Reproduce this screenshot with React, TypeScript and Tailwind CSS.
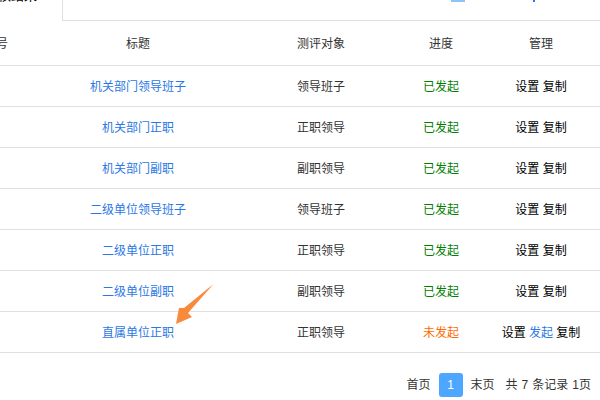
const rows = [
  { t: "机关部门领导班子", o: "领导班子", d: false },
  { t: "机关部门正职", o: "正职领导", d: false },
  { t: "机关部门副职", o: "副职领导", d: false },
  { t: "二级单位领导班子", o: "领导班子", d: false },
  { t: "二级单位正职", o: "正职领导", d: false },
  { t: "二级单位副职", o: "副职领导", d: false },
  { t: "直属单位正职", o: "正职领导", d: true },
];

export default function App() {
  return (
    <div className="relative w-[600px] h-[400px] overflow-hidden bg-white text-[12px] text-[#333] font-['Liberation_Sans','Noto_Sans_CJK_SC',sans-serif]">
      <div className="flex h-[21px] items-end">
        <div className="w-[63px] h-[21px] border-r border-[#e0e0e0] overflow-hidden relative">
          <span className="absolute right-[25px] bottom-[16px] text-[13px] text-black whitespace-nowrap">考核结果</span>
        </div>
        <div className="relative flex-1 h-[21px] border-b border-[#e0e0e0] overflow-hidden text-[#2b78e4]">
          <span className="absolute left-[388px] top-0 w-[14px] h-[2px] bg-[#8fc1fa]" />
          <span className="absolute left-[405px] bottom-[16px] whitespace-nowrap">排序</span>
          <span className="absolute left-[470px] top-0 w-[2px] h-[2px] bg-[#2b78e4]" />
          <span className="absolute left-[487px] bottom-[16px] whitespace-nowrap">删除</span>
        </div>
      </div>
      <div className="flex h-[45px] items-center border-b border-[#e0e0e0] pt-[2px]">
        <div className="w-[28px] pr-[20px] flex justify-end overflow-hidden"><span className="whitespace-nowrap">序号</span></div>
        <div className="w-[220px] text-center">标题</div>
        <div className="w-[146px] text-center">测评对象</div>
        <div className="w-[94px] text-center">进度</div>
        <div className="w-[106px] text-center">管理</div>
      </div>
      {rows.map((r) => (
        <div key={r.t} className="flex h-[41px] items-center border-b border-[#e0e0e0] pt-[2px]">
          <div className="w-[28px]" />
          <div className="w-[220px] text-center text-[#2b78e4]">{r.t}</div>
          <div className="w-[146px] text-center">{r.o}</div>
          <div className={r.d ? "w-[94px] text-center text-[#ff6a00]" : "w-[94px] text-center text-[#008000]"}>{r.d ? "未发起" : "已发起"}</div>
          <div className="w-[106px] text-center text-black whitespace-nowrap">
            设置 {r.d && <span className="text-[#2b78e4]">发起 </span>}复制
          </div>
        </div>
      ))}
      <div className="flex justify-end items-center pr-[9px] pt-[20px] gap-[8px]">
        <span>首页</span>
        <span className="w-[24px] h-[24px] rounded-[3px] bg-[#4da6ff] text-white flex items-center justify-center">1</span>
        <span>末页</span>
        <span className="ml-[3px] [word-spacing:0.7px]">共 7 条记录 1页</span>
      </div>
      <svg className="absolute left-[176px] top-[283px]" width="40" height="44" viewBox="0 0 40 44">
        <path d="M37.5 1 L8 25 L3 25 L0 41 L16 34 L12 30 Z" fill="#f98a3c" />
      </svg>
    </div>
  );
}
